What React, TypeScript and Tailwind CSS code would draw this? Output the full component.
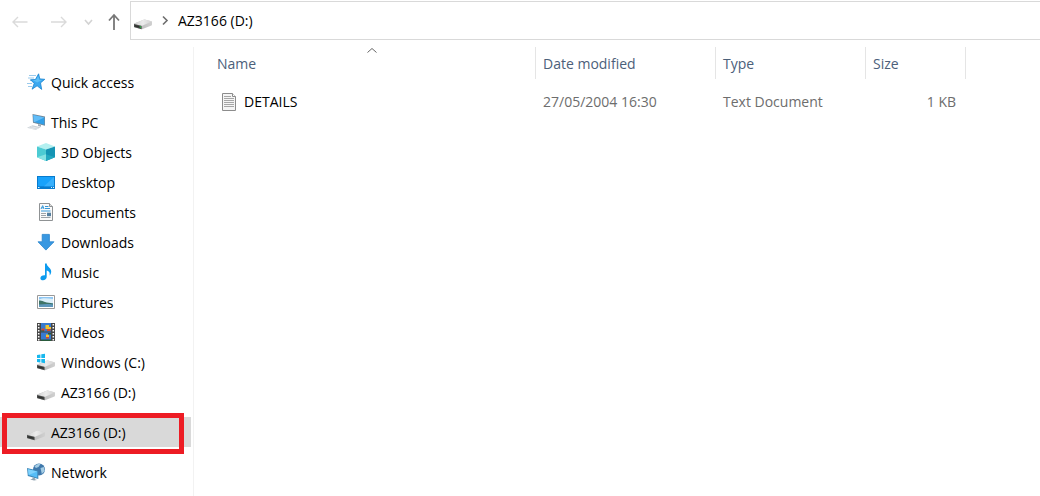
import { useId, type ReactNode } from "react";

function Svg({ children }: { children: ReactNode }) {
  return (
    <svg viewBox="0 0 18 18" className="size-[18px] shrink-0" aria-hidden="true">
      {children}
    </svg>
  );
}

function Drive() {
  const id = useId();
  return (
    <>
      <defs>
        <linearGradient id={`${id}-top`} x1="0" y1="0" x2="1" y2="0">
          <stop offset="0" stopColor="#cfcfcf" />
          <stop offset=".5" stopColor="#ececec" />
          <stop offset="1" stopColor="#d2d2d2" />
        </linearGradient>
        <linearGradient id={`${id}-side`} x1="0" y1="0" x2="1" y2="0">
          <stop offset="0" stopColor="#b4b4b4" />
          <stop offset="1" stopColor="#d0d0d0" />
        </linearGradient>
      </defs>
      <path d="M.3 11.6 9.6 7.8q1-.4 2-.1l5.8 1.5q.6.2.6.7v2.7q0 .6-.5.8L8.6 17q-.8.3-1.6.1L.6 15.2q-.6-.2-.6-.7v-2.3q0-.4.3-.6z" fill={`url(#${id}-side)`} />
      <path d="M.3 11.6 9.6 7.8q1-.4 2-.1l5.8 1.5q.6.3 0 .6l-8.7 3.8q-.8.3-1.6.1L.4 12.1q-.4-.2-.1-.5z" fill={`url(#${id}-top)`} />
      <path d="m0 12 7.2 1.8q.4.1.4.5v2.9L.5 15.2Q0 15 0 14.5z" fill="#4c4e4d" />
      <path d="m.8 13 5.8 1.5v1.6L.8 14.5z" fill="#303231" />
    </>
  );
}

function DriveIcon({ light = false }: { light?: boolean }) {
  return (
    <Svg>
      <Drive />
      {light && <path d="M5.6 14.3h1.5v1.6l-1.5-.4z" fill="#28b745" />}
    </Svg>
  );
}

function WindowsDriveIcon() {
  return (
    <Svg>
      <Drive />
      <path d="M0 2 3.4 1.5V5H0zM4.3 1.3 8 .7V5H4.3zM0 5.9h3.4v3.5L0 8.9zM4.3 5.9H8v4.3l-3.7-.6z" fill="#18b8ee" />
    </Svg>
  );
}

function StarIcon() {
  return (
    <Svg>
      <path d="M2 2.5h7M1 5h6M3 7.5h3M0 10.5h5M1 13.5h4" stroke="#8fc4ea" strokeWidth=".9" />
      <path d="m11.6.8 1.2 5.1 5 .4-4.3 3.6 1.2 6.5-4.6-3.6-5 3.4 2.1-5.8-3.7-3.7 4.9-.2z" fill="#3aa8f0" stroke="#1b84cf" strokeWidth=".8" />
      <path d="m11.3 3 .8 3.8 3.2.3-5.2 2.3-4.4-2.3 3.3-.2z" fill="#5cc0f8" />
    </Svg>
  );
}

function ComputerIcon() {
  return (
    <Svg>
      <path d="m5.5 1 12.6 2.6v9.3L6 9.7z" fill="#74899a" />
      <path d="m6.3 2.1 11.1 2.4v7.2L6.8 8.9z" fill="#319fe7" />
      <path d="m6.3 2.1 11.1 2.4-9.7 4.6-.9-.2z" fill="#62bdf8" />
      <path d="m11 11 3 .9v1.9l-3-.8z" fill="#9eabb5" />
      <path d="m0 14.8 5.5-2.6 8.2 2L8.7 17z" fill="#cdd3d8" />
      <path d="m1.8 14.8 6.8 1.4M4 13.7l7 1.6" stroke="#eef1f3" strokeWidth=".7" />
    </Svg>
  );
}

function CubeIcon() {
  return (
    <Svg>
      <path d="M0 3.5 9 0l9 3.5L9 6.5z" fill="#b3f0f0" />
      <path d="M0 3.5 9 6.5V18l-9-3.7z" fill="#4ccbd3" />
      <path d="M18 3.5 9 6.5V18l9-3.7z" fill="#1594b4" />
      <path d="m0 14.3 9-3.1V18z" fill="#86e2e3" />
      <path d="m18 14.3-9-3.1V18z" fill="#23a8bf" />
    </Svg>
  );
}

function DesktopIcon() {
  return (
    <Svg>
      <path d="M0 3h18v13H0z" fill="#087bcd" />
      <path d="M1 4h16v9.3H1z" fill="#18a2fb" />
      <path d="M17 4v9.3H7z" fill="#38b0fc" />
      <path d="M1 14.5h1.5M14 14.5h1M16 14.5h1" stroke="#d9f1ff" strokeWidth="1" />
    </Svg>
  );
}

function DocumentsIcon() {
  return (
    <Svg>
      <path d="M2.5.5h10l3 3v14h-13z" fill="#fafafa" stroke="#8f9294" />
      <path d="M12.5.5v3h3" fill="#ddd" stroke="#8f9294" />
      <path d="m4 6 1.7-3.4L7 6M4.5 4.8h2M8 3.5h3.5M8 5.5h5M4 8h9.5" stroke="#3598d9" fill="none" />
      <path d="M4 10.5h5M4 12.5h5M4 14.5h9.5" stroke="#9ca3a8" />
      <path d="M10 9.7h4v3.5h-4z" fill="#547f9f" />
    </Svg>
  );
}

function DownloadIcon() {
  return (
    <Svg>
      <path d="M5.2 1.4h7.2v7.4H17l-8.1 8.3L1 8.8h4.2z" fill="#3998e1" stroke="#2684cd" strokeWidth=".8" />
    </Svg>
  );
}

function MusicIcon() {
  return (
    <Svg>
      <path d="M8 .5h1.7c.2 3.4 4.5 4.4 4.5 8 0 1.8-.7 3-1.6 3.9.7-3.3-1-4.6-2.9-5v6.7c0 2-1.8 3.2-3.6 3.2-1.7 0-2.7-.8-2.7-2.1 0-1.8 1.9-3.1 4.6-2.9z" fill="#0c9bef" />
    </Svg>
  );
}

function PicturesIcon() {
  return (
    <Svg>
      <path d="M.5 2.5h17v13H.5z" fill="#fff" stroke="#999" />
      <path d="M2 4h14v10H2z" fill="#8ec6f3" />
      <path d="M2 6.5c4-2 9-1 14-.5v4H2z" fill="#dceffa" />
      <path d="M2 7.6c2-.4 4 .5 6 1.4 2 .8 5 1 8 1.4V12H2z" fill="#3f7468" />
      <path d="M2 11.6c5-.8 9-1 14-.2V14H2z" fill="#5e97bb" />
    </Svg>
  );
}

function VideosIcon() {
  return (
    <Svg>
      <path d="M0 0h18v18H0z" fill="#474747" />
      <path d="M4 0h10v8.5H4zM4 9.5h10V18H4z" fill="#377bd0" />
      <path d="M1.7 1v17M16.3 1v17" stroke="#fff" strokeWidth="1.5" strokeDasharray="1.6 1.4" />
      <path d="M8.5 2h3.5v2h2v2H8.5zM9 11.5h3V14H9z" fill="#f2c62f" />
      <path d="M4.5 5.5h3V8h-3zM10 6h3.5v2H10zM9 14h3v1.5H9z" fill="#d9482d" />
      <path d="M4 7.5h3v1H4zM4 16.5h10V18H4zM11 10h3v1.5h-3z" fill="#295b3b" />
    </Svg>
  );
}

function NetworkIcon() {
  return (
    <Svg>
      <circle cx="12" cy="6.4" r="6" fill="#3f78ab" />
      <path d="M7.5 3.6c2-3 4.5-2.8 6-2.6L11.5 4 9 5zM13.5 5l3.3-1 1 4-3 3z" fill="#a4cce4" />
      <path d="m0 5 11.3 2.7v8.4L.8 13z" fill="#3d87b8" />
      <path d="m1 6.2 9.3 2.3v6.2L1.7 12z" fill="#55bdf7" />
      <path d="m1 6.2 9.3 2.3L1.7 12z" fill="#7fd2fd" />
      <path d="m5.5 14.4 2.5.8v1.1l2 .6-3 .7-3.8-1.2 2.3-.6z" fill="#8fa3b1" />
    </Svg>
  );
}

function TextFileIcon() {
  return (
    <Svg>
      <path d="M2.5.5h10l3 3v14h-13z" fill="#f5f5f5" stroke="#8c8c8c" />
      <path d="M12.5.5v3h3" fill="#fff" stroke="#8c8c8c" />
      <path d="M4 3.5h7M4 5.5h10M4 7.5h10M4 9.5h10M4 11.5h10M4 13.5h10" stroke="#a6a6a6" />
    </Svg>
  );
}

const folders = [
  { name: "3D Objects", icon: <CubeIcon /> },
  { name: "Desktop", icon: <DesktopIcon /> },
  { name: "Documents", icon: <DocumentsIcon /> },
  { name: "Downloads", icon: <DownloadIcon /> },
  { name: "Music", icon: <MusicIcon /> },
  { name: "Pictures", icon: <PicturesIcon /> },
  { name: "Videos", icon: <VideosIcon /> },
  { name: "Windows (C:)", icon: <WindowsDriveIcon /> },
  { name: "AZ3166 (D:)", icon: <DriveIcon /> },
];

function NavItem({ icon, name, nested = false, selected = false }: { icon: ReactNode; name: string; nested?: boolean; selected?: boolean }) {
  return (
    <a
      href="#"
      aria-current={selected ? "page" : undefined}
      className={`flex h-[30px] items-center gap-1.5 whitespace-nowrap ${nested ? "pl-[37px]" : "pl-[27px]"} ${selected ? "mr-0.5 bg-[#d9d9d9]" : ""}`}
    >
      {icon}
      <span className="pt-0.5">{name}</span>
    </a>
  );
}

function Toolbar() {
  return (
    <header className="flex h-10 items-center pt-px">
      <div className="flex w-[130px] shrink-0 items-center pt-0.5 pl-3">
        <button type="button" aria-label="Back" className="w-[39px] text-[#dadada]">
          <svg viewBox="0 0 16 16" className="size-4" fill="none" stroke="currentColor" strokeWidth="1.4"><path d="M15.5 8H1M6 3 1 8l5 5" /></svg>
        </button>
        <button type="button" aria-label="Forward" className="w-[33px] text-[#dadada]">
          <svg viewBox="0 0 16 16" className="size-4" fill="none" stroke="currentColor" strokeWidth="1.4"><path d="M0 8h14.5M10 3l5 5-5 5" /></svg>
        </button>
        <button type="button" aria-label="Recent locations" className="w-6 text-[#d3d3d3]">
          <svg viewBox="0 0 10 10" className="size-2.5" fill="none" stroke="currentColor" strokeWidth="1.6"><path d="m1 3 3.5 4L8 3" /></svg>
        </button>
        <button type="button" aria-label="Up" className="text-[#777]">
          <svg viewBox="0 0 12 18" className="h-[18px] w-3" fill="none" stroke="currentColor" strokeWidth="1.8"><path d="M6 17V2.5M1 7.5 6 2l5 5.5" /></svg>
        </button>
      </div>
      <nav aria-label="Address" className="flex h-[39px] flex-1 items-center border border-r-0 border-[#d9d9d9] pl-[3px]">
        <DriveIcon light />
        <svg viewBox="0 0 10 12" className="ml-2.5 h-3 w-2.5" fill="none" stroke="#6d6d6d" strokeWidth="1.6" aria-hidden="true"><path d="m1 1.5 4 4-4 4" /></svg>
        <a href="#" className="ml-1.5">AZ3166 (D:)</a>
      </nav>
    </header>
  );
}

export default function App() {
  return (
    <div className="flex min-h-screen flex-col bg-white font-['Open_Sans','Noto_Sans',sans-serif] text-[14px] leading-5 text-black">
      <Toolbar />
      <div className="flex flex-1 pt-[7px]">
        <aside className="w-[194px] shrink-0 border-r border-[#f2f2f2] pt-5">
          <nav aria-label="Folders" className="flex flex-col gap-2.5">
            <NavItem name="Quick access" icon={<StarIcon />} />
            <div>
              <NavItem name="This PC" icon={<ComputerIcon />} />
              {folders.map((folder) => (
                <NavItem key={folder.name} name={folder.name} icon={folder.icon} nested />
              ))}
            </div>
            <div className="relative">
              <NavItem name="AZ3166 (D:)" icon={<DriveIcon />} selected />
              <div className="pointer-events-none absolute -top-1 right-[9px] -bottom-[7px] left-0.5 border-5 border-[#ed1c24]" />
            </div>
            <NavItem name="Network" icon={<NetworkIcon />} />
          </nav>
        </aside>
        <main className="min-w-0 flex-1 pl-[15px]">
          <table className="w-full table-fixed border-separate border-spacing-0 text-left">
            <colgroup>
              <col className="w-[327px]" />
              <col className="w-[180px]" />
              <col className="w-[150px]" />
              <col className="w-[100px]" />
              <col />
            </colgroup>
            <thead className="text-[#4c607a]">
              <tr className="h-8">
                <th scope="col" aria-sort="ascending" className="relative border-r border-[#e5e5e5] px-2 pt-0.5 font-normal">
                  Name
                  <svg viewBox="0 0 10 6" className="absolute top-0 left-1/2 h-1.5 w-2.5 -translate-x-1/2" fill="none" stroke="#666" aria-hidden="true"><path d="m.5 5.5 4.5-4 4.5 4" /></svg>
                </th>
                <th scope="col" className="border-r border-[#e5e5e5] px-[7px] pt-0.5 font-normal">Date modified</th>
                <th scope="col" className="border-r border-[#e5e5e5] px-[7px] pt-0.5 font-normal">Type</th>
                <th scope="col" className="border-r border-[#e5e5e5] px-[7px] pt-0.5 font-normal">Size</th>
                <td />
              </tr>
            </thead>
            <tbody className="text-[#6d6d6d]">
              <tr className="h-[46px]">
                <td className="px-2 text-black">
                  <a href="#" className="flex items-center gap-1.5 pl-[3px]">
                    <TextFileIcon />
                    <span>DETAILS</span>
                  </a>
                </td>
                <td className="px-[7px]">27/05/2004 16:30</td>
                <td className="px-[7px]">Text Document</td>
                <td className="pr-2.5 text-right">1 KB</td>
                <td />
              </tr>
            </tbody>
          </table>
        </main>
      </div>
    </div>
  );
}
